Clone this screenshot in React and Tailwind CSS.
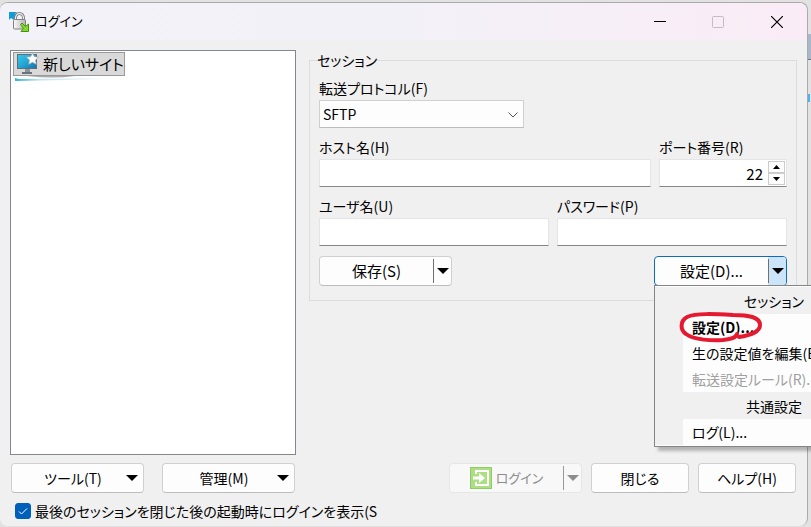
import React, { useState } from 'react';

const menuItems = [
  { type: 'header', label: 'セッション' },
  { type: 'item', label: '設定(D)...', bold: true },
  { type: 'item', label: '生の設定値を編集(E)...' },
  { type: 'item', label: '転送設定ルール(R)...', disabled: true },
  { type: 'header', label: '共通設定' },
  { type: 'item', label: 'ログ(L)...' },
];

const inputClass =
  'h-7 w-full min-w-0 border border-[#e5e5e5] border-b-[#868686] bg-white px-1 text-[15px] outline-none';
const buttonClass =
  'flex items-center justify-center rounded border border-[#d0d0d0] border-b-[#bcbcbc] bg-[#fdfdfd]';

function Triangle({ className = '' }) {
  return (
    <svg className={className} width="12" height="6" viewBox="0 0 12 6" fill="currentColor" aria-hidden="true">
      <path d="M0 0h12L6 6z" />
    </svg>
  );
}

function AppIcon() {
  return (
    <svg className="shrink-0" width="20" height="20" viewBox="0 0 20 20" aria-hidden="true">
      <defs>
        <linearGradient id="lock">
          <stop offset="0" stopColor="#fafafa" />
          <stop offset="1" stopColor="#b4b4b4" />
        </linearGradient>
      </defs>
      <path d="M0 0h8L6 2l2 3-3 3-3-2-2 2z" fill="#139ad8" />
      <path d="M6.500 9V6a4 4.500 0 0 1 8 0v3" fill="none" stroke="#777" strokeWidth="3" />
      <path d="M6.500 9V6a4 4.500 0 0 1 8 0v3" fill="none" stroke="#ececec" strokeWidth="1.300" />
      <rect x="4.500" y="7.500" width="12" height="9.500" rx="1" fill="url(#lock)" stroke="#808080" />
      <path d="M11.500 12.500L13 11l3.500 3.500L19.500 12v7.500H12l2.500-3z" fill="#86d92c" stroke="#43950f" />
    </svg>
  );
}

function SiteIcon() {
  return (
    <svg className="shrink-0" width="22" height="22" viewBox="0 0 22 22" aria-hidden="true">
      <defs>
        <linearGradient id="screen" x1="0" y1="0" x2="1" y2="1">
          <stop offset="0" stopColor="#36cbea" />
          <stop offset=".5" stopColor="#24a6d4" />
          <stop offset="1" stopColor="#1870a8" />
        </linearGradient>
      </defs>
      <rect x=".5" y="1.500" width="19" height="14" fill="url(#screen)" stroke="#5f6d78" />
      <path d="M8 16h5v3H8z" fill="#8c959d" />
      <path d="M5 19h10v2H5z" fill="#69737b" />
      <path
        d="M15.500 0l1.800 3.700 4.200.5-3 2.900.8 4.200-3.800-2-3.800 2 .8-4.200-3-2.900 4.200-.5z"
        fill="#fff"
        stroke="#a7aeb5"
        strokeWidth=".7"
      />
    </svg>
  );
}

function LoginIcon() {
  return (
    <svg className="shrink-0" width="22" height="22" viewBox="0 0 22 22" aria-hidden="true">
      <rect x=".5" y=".5" width="21" height="21" fill="#abdf82" stroke="#8fcc68" />
      <path d="M6 7V4h12v14H6v-3" fill="none" stroke="#fff" strokeWidth="2" />
      <path d="M3 9.500h6V6l6 5-6 5v-3.500H3z" fill="#fff" />
    </svg>
  );
}

function TitleBar() {
  return (
    <header className="flex h-[37px] items-center justify-between bg-linear-to-r from-[#f2f2f8] via-[#f3f1f8] to-[#faecf6] pl-[9px]">
      <div className="flex items-center gap-1.5">
        <AppIcon />
        <h1 className="pb-0.5 text-[13px]">ログイン</h1>
      </div>
      <div className="flex">
        <button type="button" aria-label="最小化" className="flex h-9 w-[58px] items-center justify-center">
          <svg width="12" height="12" viewBox="0 0 12 12">
            <path d="M0 5.500h12" stroke="#000" />
          </svg>
        </button>
        <button type="button" aria-label="最大化" disabled className="flex h-9 w-[58px] items-center justify-center">
          <svg width="12" height="12" viewBox="0 0 12 12">
            <rect x=".5" y=".5" width="11" height="11" rx="1" fill="none" stroke="#c4bcc4" />
          </svg>
        </button>
        <button type="button" aria-label="閉じる" className="flex h-9 w-[60px] items-center justify-center">
          <svg width="12" height="12" viewBox="0 0 12 12">
            <path d="M0 0l12 12M12 0L0 12" stroke="#000" strokeWidth="1.200" />
          </svg>
        </button>
      </div>
    </header>
  );
}

function SiteList() {
  return (
    <div className="h-[405px] w-[286px] shrink-0 border border-[#828790] bg-white px-0.5 py-px">
      <button
        type="button"
        className="flex h-6 w-28 items-center gap-1 border border-[#999] bg-[#d9d9d9] pl-[3px] text-[15px] whitespace-nowrap"
      >
        <SiteIcon />
        新しいサイト
      </button>
      <svg className="block" width="140" height="34" viewBox="0 0 140 34" aria-hidden="true">
        <defs>
          <linearGradient id="streak">
            <stop offset="0" stopColor="#35b7d4" />
            <stop offset=".25" stopColor="#c3e3ea" />
            <stop offset="1" stopColor="#fff" />
          </linearGradient>
        </defs>
        <path d="M14 0h48Q40 3 14 0z" fill="#aaa" />
        <path d="M2 2l4 1 94-1v1L6 5H2z" fill="url(#streak)" />
      </svg>
    </div>
  );
}

function SplitButton({ label, active, onToggle, expanded }) {
  return (
    <div
      className={`flex h-[30px] w-[133px] rounded border bg-[#fdfdfd] ${
        active ? 'border-[#0f6cbd]' : 'border-[#d0d0d0] border-b-[#bcbcbc]'
      }`}
    >
      <button type="button" className="flex-1 text-[15px] whitespace-nowrap">
        {label}
      </button>
      <button
        type="button"
        aria-label={`${label} メニュー`}
        aria-expanded={expanded}
        onClick={onToggle}
        className={`flex w-[18px] items-center justify-center rounded-r-[3px] ${active ? 'bg-[#cce4f7]' : ''}`}
      >
        <span className="h-6 w-px shrink-0 bg-[#707070]" />
        <Triangle className="mx-auto shrink-0" />
      </button>
    </div>
  );
}

function SettingsMenu() {
  return (
    <div
      role="menu"
      className="absolute top-[29px] left-0 z-10 w-[212px] border border-[#858585] bg-[#fdfdfd] py-px shadow-[4px_4px_3px_rgba(0,0,0,0.25)]"
    >
      <div className="border-l-[28px] border-[#f0f0f0]">
        {menuItems.map((item) =>
          item.type === 'header' ? (
            <div key={item.label} className="flex h-[27px] items-center justify-center bg-[#f0f0f0]">
              {item.label}
            </div>
          ) : (
            <button
              key={item.label}
              type="button"
              role="menuitem"
              disabled={item.disabled}
              className={`flex h-[26px] w-full items-center pl-[9px] whitespace-nowrap ${
                item.bold ? 'font-bold' : ''
              } ${item.disabled ? 'text-[#a0a0a0]' : ''}`}
            >
              {item.label}
            </button>
          )
        )}
      </div>
      <svg
        className="pointer-events-none absolute top-[26px] left-6"
        width="88"
        height="34"
        viewBox="0 0 88 34"
        fill="none"
        stroke="#e5192f"
        strokeWidth="4"
        strokeLinecap="round"
        strokeLinejoin="round"
        aria-hidden="true"
      >
        <path d="M60 25C72 23 81 20 81 13C81 5 70 3 54 3C36 2 17 1 8 5C1 9 1 18 7 22C15 28 34 29 44 28C52 27 57 26 58 22" />
      </svg>
    </div>
  );
}

function SessionForm() {
  const [protocol, setProtocol] = useState('SFTP');
  const [port, setPort] = useState(22);
  const [menuOpen, setMenuOpen] = useState(true);

  return (
    <fieldset className="h-[251px] min-w-0 flex-1 border border-[#dcdcdc] px-[9px]">
      <legend className="-ml-0.5 h-5 leading-5">セッション</legend>
      <div className="flex flex-col gap-[9px] pt-2">
        <div className="flex flex-col gap-0.5">
          <label htmlFor="protocol" className="leading-5">転送プロトコル(F)</label>
          <div className="relative w-[205px]">
            <select
              id="protocol"
              value={protocol}
              onChange={(e) => setProtocol(e.target.value)}
              className="h-7 w-full appearance-none border border-[#d0d0d0] border-b-[#bcbcbc] bg-[#fdfdfd] pl-[3px]"
            >
              <option>SFTP</option>
              <option>SCP</option>
              <option>FTP</option>
              <option>WebDAV</option>
            </select>
            <svg
              className="pointer-events-none absolute top-3 right-1.5"
              width="10"
              height="6"
              viewBox="0 0 10 6"
              fill="none"
              stroke="#555"
              aria-hidden="true"
            >
              <path d="M.5.5L5 5L9.500.5" />
            </svg>
          </div>
        </div>

        <div className="flex gap-2">
          <div className="flex min-w-0 flex-1 flex-col gap-0.5">
            <label htmlFor="host" className="leading-5">ホスト名(H)</label>
            <input id="host" type="text" className={inputClass} />
          </div>
          <div className="flex w-32 flex-col gap-0.5">
            <label htmlFor="port" className="leading-5">ポート番号(R)</label>
            <div className="relative">
              <input
                id="port"
                type="text"
                inputMode="numeric"
                value={port}
                onChange={(e) => setPort(Number(e.target.value) || 0)}
                className={`${inputClass} pr-[23px] text-right`}
              />
              <div className="absolute top-0.5 right-0.5 flex flex-col">
                <button
                  type="button"
                  aria-label="増やす"
                  onClick={() => setPort(port + 1)}
                  className="flex h-3 w-[17px] items-center justify-center border border-[#ccc] bg-[#fdfdfd]"
                >
                  <svg width="7" height="4" viewBox="0 0 7 4"><path d="M0 4h7L3.500 0z" /></svg>
                </button>
                <button
                  type="button"
                  aria-label="減らす"
                  onClick={() => setPort(port - 1)}
                  className="flex h-3 w-[17px] items-center justify-center border border-[#ccc] bg-[#fdfdfd]"
                >
                  <svg width="7" height="4" viewBox="0 0 7 4"><path d="M0 0h7L3.500 4z" /></svg>
                </button>
              </div>
            </div>
          </div>
        </div>

        <div className="grid grid-cols-2 gap-2">
          <div className="flex flex-col gap-0.5">
            <label htmlFor="user" className="leading-5">ユーザ名(U)</label>
            <input id="user" type="text" className={inputClass} />
          </div>
          <div className="flex flex-col gap-0.5">
            <label htmlFor="password" className="leading-5">パスワード(P)</label>
            <input id="password" type="password" className={inputClass} />
          </div>
        </div>

        <div className="flex justify-between pt-px">
          <SplitButton label="保存(S)" />
          <div className="relative">
            <SplitButton
              label="設定(D)..."
              active
              expanded={menuOpen}
              onToggle={() => setMenuOpen(!menuOpen)}
            />
            {menuOpen && <SettingsMenu />}
          </div>
        </div>
      </div>
    </fieldset>
  );
}

function FooterButtons() {
  return (
    <div className="mt-2 flex justify-between px-px">
      <div className="flex gap-[18px]">
        {['ツール(T)', '管理(M)'].map((label) => (
          <button key={label} type="button" className={`${buttonClass} h-[30px] w-[133px] pr-[5px] pl-2`}>
            <span className="flex-1">{label}</span>
            <Triangle />
          </button>
        ))}
      </div>
      <div className="flex gap-[9px]">
        <div className="flex h-[30px] w-[133px] items-center rounded border border-[#e6e6e6] bg-[#f8f8f8] text-[#8c8c8c]">
          <button type="button" disabled className="flex flex-1 items-center justify-center gap-1 text-[13px]">
            <LoginIcon />
            ログイン
          </button>
          <button type="button" disabled aria-label="ログイン メニュー" className="flex w-[18px] items-center">
            <span className="h-6 w-px shrink-0 bg-[#999]" />
            <Triangle className="mx-auto shrink-0" />
          </button>
        </div>
        <button type="button" className={`${buttonClass} h-[30px] w-[98px]`}>閉じる</button>
        <button type="button" className={`${buttonClass} h-[30px] w-[98px]`}>ヘルプ(H)</button>
      </div>
    </div>
  );
}

export default function App() {
  const [showLogin, setShowLogin] = useState(true);

  return (
    <div className="flex min-h-screen overflow-hidden bg-[#e2e2e2] pt-0.5 font-['Noto_Sans_CJK_JP',sans-serif] text-sm leading-5 text-black [font-feature-settings:'palt']">
      <div className="relative mb-px min-w-0 flex-1 rounded-t-lg rounded-b-lg border-t border-r border-[#aaa] bg-[#f0f0f0]">
        <div className="overflow-hidden rounded-t-lg">
          <TitleBar />
        </div>
        <main className="px-2.5 pt-2.5">
          <div className="flex gap-[13px]">
            <SiteList />
            <SessionForm />
          </div>
          <FooterButtons />
          <div className="mt-2 flex items-center gap-1 pl-[5px]">
            <span className="relative flex size-4">
              <input
                id="show-login"
                type="checkbox"
                checked={showLogin}
                onChange={(e) => setShowLogin(e.target.checked)}
                className="peer size-4 appearance-none rounded-[3px] border border-[#005fb8] checked:bg-[#005fb8]"
              />
              <svg
                className="pointer-events-none absolute inset-0 hidden peer-checked:block"
                viewBox="0 0 16 16"
                fill="none"
                stroke="#fff"
                aria-hidden="true"
              >
                <path d="M4 8.500l2.500 2.500L12 5.500" />
              </svg>
            </span>
            <label htmlFor="show-login" className="whitespace-nowrap">
              最後のセッションを閉じた後の起動時にログインを表示(S
            </label>
          </div>
        </main>
      </div>
      <div className="w-[3px] shrink-0 overflow-hidden pt-8" aria-hidden="true">
        <div className="h-[26px] border-b border-[#66788c] bg-[#a9b8c9]" />
        <div className="mt-[34px] h-2 w-0.5 bg-[#4fb4ee]" />
      </div>
    </div>
  );
}
